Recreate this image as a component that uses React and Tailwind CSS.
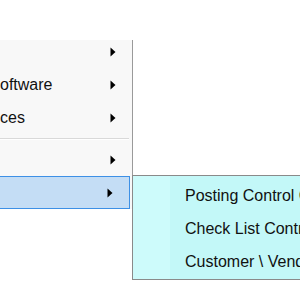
import React from 'react';

const Arrow = () => (
  <svg width="6" height="10" viewBox="0 0 6 10" className="shrink-0">
    <polygon points="0.5,0.5 5.5,5 0.5,9.5" fill="#000" />
  </svg>
);

const MenuRow = ({ label, className = '' }) => (
  <div className={`flex items-center h-[33px] pr-[16px] ${className}`}>
    <span className="flex-1 whitespace-nowrap">{label}</span>
    <Arrow />
  </div>
);

const subItems = ['Posting Control Center', 'Check List Control', 'Customer \\ Vendor Statement'];

export default function App() {
  return (
    <div className="relative w-[300px] h-[281px] overflow-hidden bg-white text-[16px] text-[#111] font-['Liberation_Sans',Arial,sans-serif]">
      <div className="mt-[40px] w-[133px] bg-[#f8f8f8] border-r border-[#9a9a9a]">
        <div className="flex items-center h-[28px] pb-[5px] pr-[16px] justify-end">
          <Arrow />
        </div>
        <MenuRow label="oftware" />
        <MenuRow label="ces" />
        <div className="h-[9px] flex flex-col justify-center pr-[3px]">
          <div className="h-px bg-[#d9d9d9]" />
          <div className="h-px bg-white" />
        </div>
        <MenuRow label="" />
        <MenuRow label="" className="border border-l-0 border-[#3d90e6] bg-[#c4ddf5] mr-[2px] pr-[14px]" />
      </div>

      {/* submenu */}
      <div className="absolute left-[132px] top-[175px] w-[260px] h-[105px] border border-[#8a8a8a] bg-[#c3f8f8] flex">
        <div className="w-[37px] shrink-0 bg-[#cdfbfb]" />
        <div className="flex-1 min-w-0 flex flex-col pt-[3px] pl-[15px]">
          {subItems.map((t) => (
            <div key={t} className="h-[33px] flex items-center whitespace-nowrap">
              {t}
            </div>
          ))}
        </div>
      </div>
    </div>
  );
}
